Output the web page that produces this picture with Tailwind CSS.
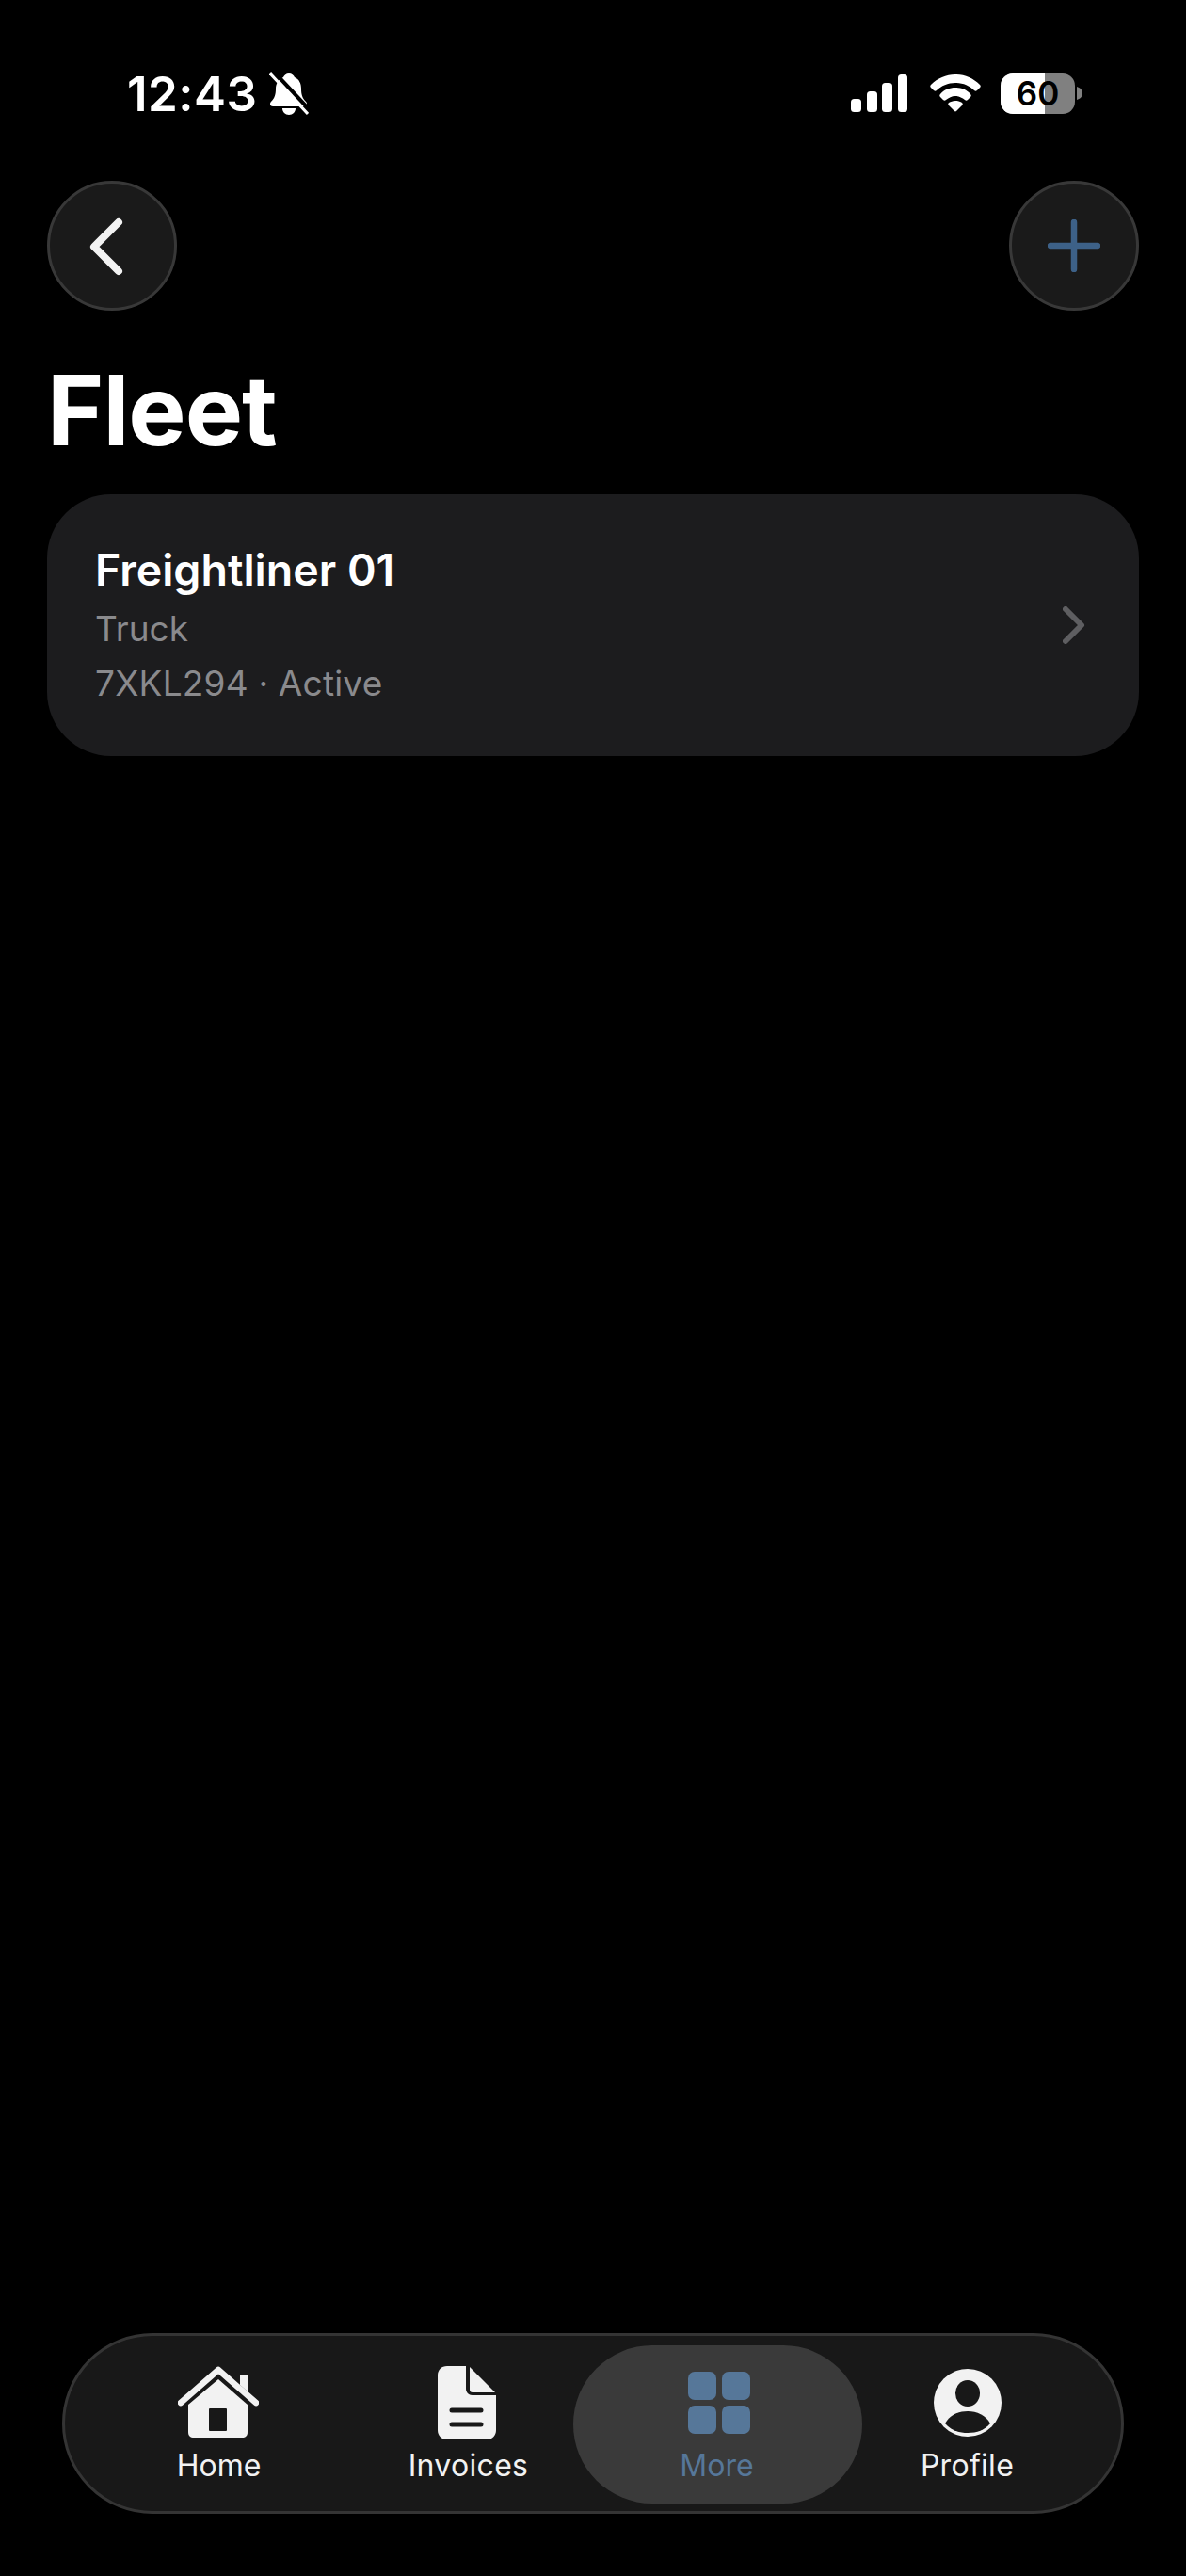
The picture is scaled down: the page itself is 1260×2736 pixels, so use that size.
<!doctype html>
<html><head><meta charset="utf-8"><script src="https://cdn.jsdelivr.net/npm/@tailwindcss/browser@4"></script></head>
<body class="bg-black">
<div class="w-[1260px] h-[2736px] bg-black text-white flex flex-col font-['Inter',sans-serif] overflow-hidden">
  <div class="h-[192px] shrink-0 flex justify-between items-start pt-[70px] pl-[135px] pr-[110px]">
    <div class="flex items-center gap-[12px] h-[60px]">
      <span class="text-[51px] leading-[60px] font-semibold tracking-[0.5px]">12:43</span>
      <svg class="w-[42px] h-[46px]" viewBox="0 0 42 46"><path fill="#fff" d="M21 1c3 0 5 2 6 4 5 2 7 7 7 12 0 6 1 10 5 14 2 2 1 5-2 5H4c-3 0-4-3-2-5 4-4 5-8 5-14 0-5 3-10 8-12 1-2 3-4 6-4z"/><path fill="#fff" d="M14 38h14c0 4-3 7-7 7s-7-3-7-7z"/><path d="M4 -2L45 42" stroke="#000" stroke-width="4"/><path d="M1 1L41 44" stroke="#fff" stroke-width="3"/></svg>
    </div>
    <div class="flex items-center h-[60px] mt-[-1px]">
      <svg class="w-[60px] h-[40px]" viewBox="0 0 60 40" fill="#fff"><rect x="0" y="26" width="11" height="14" rx="3.5"/><rect x="17" y="18" width="11" height="22" rx="3.5"/><rect x="33" y="9" width="11" height="31" rx="3.5"/><rect x="50" y="0" width="10" height="40" rx="3.5"/></svg>
      <svg class="w-[54px] h-[40px] ml-[24px] mr-[21px]" viewBox="0 0 54 40" fill="#fff"><path d="M27 0c10 0 19 4 26 11 1 1 1 2 0 3l-3 3c-1 1-2 1-3 0-5-5-12-8-20-8S12 12 7 17c-1 1-2 1-3 0l-3-3c-1-1-1-2 0-3C8 4 17 0 27 0z"/><path d="M27 14c6 0 12 2 16 7 1 1 1 2 0 3l-3 3c-1 1-2 1-3 0-3-2-6-4-10-4s-7 2-10 4c-1 1-2 1-3 0l-3-3c-1-1-1-2 0-3 4-5 10-7 16-7z"/><path d="M27 28c3 0 5 1 7 2 1 1 1 2 0 3l-6 6c-.6.6-1.4.6-2 0l-6-6c-1-1-1-2 0-3 2-1 4-2 7-2z"/></svg>
      <div class="flex items-center gap-[2px]">
        <div class="relative w-[79px] h-[43px] rounded-[13px] overflow-hidden bg-[#808080] flex items-center justify-center">
          <div class="absolute left-0 top-0 bottom-0 w-[47px] bg-white"></div>
          <span class="relative text-black text-[35px] leading-[43px] font-semibold">60</span>
        </div>
        <svg class="w-[6px] h-[14px]" viewBox="0 0 6 14"><path fill="#808080" d="M0 0c3 1 6 3 6 7s-3 6-6 7z"/></svg>
      </div>
    </div>
  </div>

  <div class="shrink-0 flex justify-between px-[50px]">
    <button class="w-[138px] h-[138px] rounded-full bg-[#1a1a1a] border-[3px] border-[#383838] flex items-center justify-center">
      <svg class="w-[40px] h-[62px] mr-[8px] mt-[2px]" viewBox="0 0 40 62"><path d="M31 5L5 31L31 57" fill="none" stroke="#f2f2f2" stroke-width="8" stroke-linecap="round" stroke-linejoin="round"/></svg>
    </button>
    <button class="w-[138px] h-[138px] rounded-full bg-[#1a1a1a] border-[3px] border-[#383838] flex items-center justify-center">
      <svg class="w-[56px] h-[56px]" viewBox="0 0 56 56"><path d="M28 3V53M3 28H53" fill="none" stroke="#3d6188" stroke-width="6.5" stroke-linecap="round"/></svg>
    </button>
  </div>

  <h1 class="shrink-0 mt-[44px] px-[50px] text-[103px] leading-[124px] font-bold tracking-[-1px]">Fleet</h1>

  <div class="shrink-0 mx-[50px] mt-[27px] h-[278px] rounded-[68px] bg-[#1c1c1e] flex items-center justify-between pl-[51px] pr-[57px]">
    <div class="flex flex-col mt-[6px]">
      <div class="text-[46.5px] leading-[58px] font-semibold mb-[5px] mt-[-4px]">Freightliner 01</div>
      <div class="text-[37px] leading-[58px] text-[#8a8a8d]">Truck</div>
      <div class="text-[37px] leading-[58px] text-[#8a8a8d] tracking-[0.2px]">7XKL294 · Active</div>
    </div>
    <svg class="w-[24px] h-[40px]" viewBox="0 0 24 40"><path d="M3 3L20 20L3 37" fill="none" stroke="#5e5e61" stroke-width="6" stroke-linecap="round" stroke-linejoin="round"/></svg>
  </div>

  <nav class="mt-auto mb-[66px] mx-[66px] h-[192px] shrink-0 rounded-[96px] bg-[#181818] border-[3px] border-[#343434] grid grid-cols-[repeat(4,265px)] justify-center items-stretch">
    <div class="relative flex flex-col items-center pt-[32px]">
      <svg class="w-[86px] h-[78px] mr-[2px]" viewBox="0 0 86 78" fill="#f2f2f2"><path d="M43 14L74 41V70c0 4-2 6-6 6H17c-4 0-6-2-6-6V41z"/><rect x="33" y="45" width="19" height="24" rx="1" fill="#181818"/><path d="M3 39L43 4L83 39" fill="none" stroke="#f2f2f2" stroke-width="6.5" stroke-linecap="round" stroke-linejoin="round"/><path d="M66 9h8v18l-8-7z"/></svg>
      <span class="mt-[6px] text-[32px] leading-[44px] font-normal text-[#f2f2f2]">Home</span>
    </div>
    <div class="relative flex flex-col items-center pt-[32px]">
      <svg class="w-[62px] h-[78px] mr-[3px]" viewBox="0 0 62 78" fill="#f2f2f2"><path d="M10 0H30V24c0 4 3 7 7 7H62V68c0 6-4 10-10 10H10C4 78 0 74 0 68V10C0 4 4 0 10 0z"/><path d="M34 1L61 28H37c-2 0-3-1-3-3z"/><path d="M15 47H46M15 62H46" stroke="#181818" stroke-width="5" stroke-linecap="round"/></svg>
      <span class="mt-[6px] text-[32px] leading-[44px] font-normal text-[#f2f2f2] tracking-[0.3px]">Invoices</span>
    </div>
    <div class="relative flex flex-col items-center pt-[32px]">
      <div class="absolute left-[-21px] right-[-21px] top-[10px] h-[168px] rounded-[84px] bg-[#3a3a3a]"></div>
      <svg class="relative w-[66px] h-[66px] mt-[6px] mb-[6px] ml-[2px]" viewBox="0 0 66 66" fill="#567799"><rect x="0" y="0" width="30" height="30" rx="7"/><rect x="36" y="0" width="30" height="30" rx="7"/><rect x="0" y="36" width="30" height="30" rx="7"/><rect x="36" y="36" width="30" height="30" rx="7"/></svg>
      <span class="relative mt-[6px] text-[32px] leading-[44px] font-normal text-[#567799] mr-[2px]">More</span>
    </div>
    <div class="relative flex flex-col items-center pt-[32px]">
      <svg class="w-[74px] h-[78px] py-[3px]" viewBox="0 0 74 72"><circle cx="37" cy="36" r="36" fill="#f2f2f2"/><ellipse cx="37" cy="26" rx="13" ry="14" fill="#181818"/><path d="M13 58c5-9 14-13 24-13s19 4 24 13c-6 7-14 10-24 10S19 65 13 58z" fill="#181818"/></svg>
      <span class="mt-[6px] text-[32px] leading-[44px] font-normal text-[#f2f2f2] tracking-[0.3px]">Profile</span>
    </div>
  </nav>
</div>
</body></html>
